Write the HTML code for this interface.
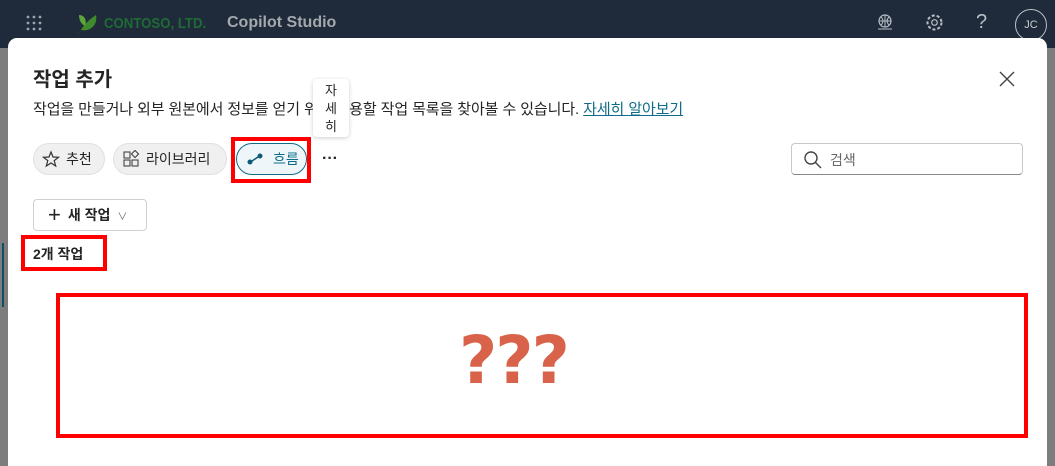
<!DOCTYPE html>
<html style="overflow:hidden;height:466px"><head><meta charset="utf-8"><style>
*{box-sizing:border-box;margin:0;padding:0}
body{width:1055px;height:466px;overflow:hidden;background:#7d7d7d;font-family:"Liberation Sans","Noto Sans CJK KR",sans-serif;position:relative;color:#242424}
.top{position:absolute;left:0;top:0;width:1055px;height:48px;background:#1f2b3a}
.modal{position:absolute;left:8px;top:38px;width:1039px;height:428px;background:#fff;border-radius:9px 9px 0 0}
.abs{position:absolute}
.pill{position:absolute;top:143px;height:32px;border-radius:16px;background:#f0f0f0;border:1px solid #e0e0e0;font-size:14px;display:flex;align-items:center;padding-left:8px;gap:6px}
.red{position:absolute;border:4px solid #f00}
</style></head><body>
<div class="top">
 <svg class="abs" style="left:25px;top:14px" width="18" height="18"><g fill="#9aa3ad"><circle cx="3" cy="3" r="1.4"/><circle cx="9" cy="3" r="1.4"/><circle cx="15" cy="3" r="1.4"/><circle cx="3" cy="9" r="1.4"/><circle cx="9" cy="9" r="1.4"/><circle cx="15" cy="9" r="1.4"/><circle cx="3" cy="15" r="1.4"/><circle cx="15" cy="15" r="1.4"/><circle cx="9" cy="15" r="1.4"/></g></svg>
 <svg class="abs" style="left:75px;top:11px" width="24" height="26"><path d="M3 24 C8 15 12 10 21 4 C23 13 16 21 6 19Z" fill="#3f8a2a"/><path d="M4 4 C10 4 12 10 10 15 C6 13 4 9 4 4Z" fill="#5aa63a"/></svg>
 <div class="abs" style="left:104px;top:15px;color:#1e6b35;font-weight:bold;font-size:15px;transform:scaleX(0.88);transform-origin:left">CONTOSO, LTD.</div>
 <div class="abs" style="left:227px;top:14px;color:#a4a9ae;font-weight:bold;font-size:16px">Copilot Studio</div>
 <svg class="abs" style="left:876px;top:13px" width="18" height="18"><circle cx="9" cy="8" r="6" fill="none" stroke="#b8bec6" stroke-width="1.2"/><path d="M3 8 H15 M9 2 V14 M5 4 Q9 8 5 12 M13 4 Q9 8 13 12 M2 16 H16" stroke="#b8bec6" fill="none" stroke-width="1"/></svg>
 <svg class="abs" style="left:925px;top:13px" width="19" height="19"><circle cx="9.5" cy="9.5" r="7" fill="none" stroke="#b8bec6" stroke-width="2" stroke-dasharray="3 2"/><circle cx="9.5" cy="9.5" r="2.8" fill="none" stroke="#b8bec6" stroke-width="1.2"/></svg>
 <div class="abs" style="left:976px;top:11px;color:#b8bec6;font-size:20px">?</div>
 <div class="abs" style="left:1015px;top:9px;width:32px;height:32px;border:1px solid #b8bec6;border-radius:50%;color:#c8ccd1;font-size:11px;text-align:center;line-height:30px">JC</div>
</div>
<div class="abs" style="left:2px;top:243px;width:2px;height:64px;background:#0f5068"></div>
<div class="modal"></div>
<div class="abs" style="left:33px;top:63px;font-size:20px;font-weight:bold">작업 추가</div>
<svg class="abs" style="left:999px;top:71px" width="16" height="16"><path d="M1 1 L15 15 M15 1 L1 15" stroke="#444" stroke-width="1.4"/></svg>
<div class="abs" style="left:33px;top:98px;font-size:15px;white-space:nowrap;letter-spacing:-0.1px">작업을 만들거나 외부 원본에서 정보를 얻기 위해 사용할 작업 목록을 찾아볼 수 있습니다. <span style="color:#0f6c89;text-decoration:underline">자세히 알아보기</span></div>
<div class="abs" style="left:313px;top:79px;width:36px;height:58px;background:#fff;border-radius:4px;box-shadow:0 1px 4px rgba(0,0,0,.2);font-size:13px;text-align:center;line-height:18px;padding-top:3px">자<br>세<br>히</div>
<div class="pill" style="left:33px;width:72px"><svg width="18" height="18"><path d="M9 2 L11 7 L16.5 7.3 L12.2 10.6 L13.7 16 L9 13 L4.3 16 L5.8 10.6 L1.5 7.3 L7 7Z" fill="none" stroke="#333" stroke-width="1.2"/></svg>추천</div>
<div class="pill" style="left:113px;width:114px"><svg width="18" height="18"><rect x="2" y="2" width="6" height="6" fill="none" stroke="#333"/><rect x="2" y="10" width="6" height="6" fill="none" stroke="#333"/><rect x="10" y="10" width="6" height="6" fill="none" stroke="#333"/><rect x="10.5" y="1.5" width="5" height="5" transform="rotate(45 13 4)" fill="none" stroke="#333"/></svg>라이브러리</div>
<div class="pill" style="left:236px;width:71px;background:#eef6fa;border-color:#0f6c89;color:#0f6c89;padding-left:10px;gap:10px"><svg width="16" height="14"><circle cx="3" cy="10" r="2.5" fill="#0f5a78"/><circle cx="13" cy="4" r="2.5" fill="#0f5a78"/><path d="M5 9 L11 5" stroke="#0f5a78" stroke-width="1.5"/></svg>흐름</div>
<div class="red" style="left:231px;top:137px;width:80px;height:46px"></div>
<div class="abs" style="left:322px;top:150px;font-size:16px;font-weight:bold">···</div>
<div class="abs" style="left:791px;top:143px;width:232px;height:32px;border:1px solid #c8c8c8;border-bottom-color:#888;border-radius:4px"></div>
<svg class="abs" style="left:803px;top:150px" width="20" height="20"><circle cx="8" cy="8" r="6" fill="none" stroke="#444" stroke-width="1.4"/><path d="M12.5 12.5 L18 18" stroke="#444" stroke-width="1.4"/></svg>
<div class="abs" style="left:830px;top:150px;font-size:14px;color:#666">검색</div>
<div class="abs" style="left:33px;top:199px;width:114px;height:32px;border:1px solid #d1d1d1;border-radius:4px;font-size:14px;font-weight:bold;display:flex;align-items:center;padding-left:14px;gap:7px"><span style="font-weight:normal;font-size:22px;line-height:20px">+</span>새 작업 <span style="font-weight:normal;font-size:10px;color:#666">∨</span></div>
<div class="red" style="left:21px;top:235px;width:86px;height:36px"></div>
<div class="abs" style="left:33px;top:244px;font-size:14px;font-weight:bold">2개 작업</div>
<div class="red" style="left:56px;top:293px;width:972px;height:145px"></div>
<div class="abs" style="left:459px;top:322px;font-family:'DejaVu Sans',sans-serif;font-weight:bold;font-size:66px;color:#d9634a;letter-spacing:-2px">???</div>
</body></html>
